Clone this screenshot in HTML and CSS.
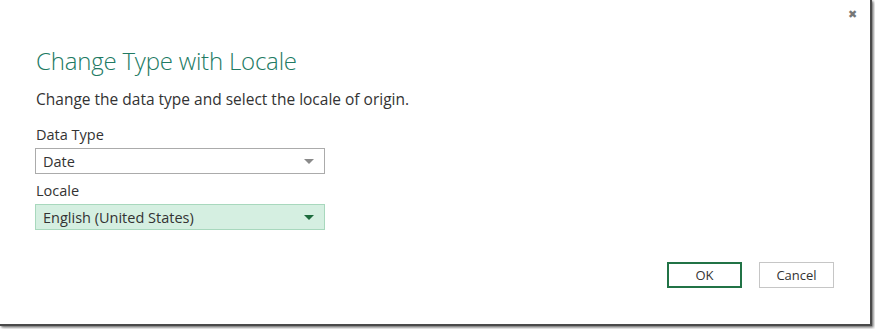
FILE: index.html
```html
<!DOCTYPE html>
<html>
  <head>
    <title>Change Type with Locale</title>
    <link rel="stylesheet" href="styles.css">
  </head>
  <body>
    <div id="dialog">
      <button id="close-button" title="Close">&#x2716;</button>
      <div id="dialog-body">
        <h1 class="dialog-title">Change Type with Locale</h1>
        <p class="dialog-desc">Change the data type and select the locale of origin.</p>
        <div class="field">
          <label class="field-label">Data Type</label>
          <div class="select">
            <span class="select-value">Date</span>
            <span class="select-arrow"></span>
          </div>
        </div>
        <div class="field">
          <label class="field-label">Locale</label>
          <div class="select focused">
            <span class="select-value">English (United States)</span>
            <span class="select-arrow"></span>
          </div>
        </div>
      </div>
      <div id="dialog-footer">
        <button class="btn primary">OK</button>
        <button class="btn">Cancel</button>
      </div>
    </div>
  </body>
</html>
```

FILE: styles.css
```css
* {
  margin: 0;
  padding: 0;
  box-sizing: border-box;
}

body {
  font-family: "Open Sans", "Noto Sans", sans-serif;
  background-color: #ffffff;
  color: #333;
  width: 875px;
  height: 329px;
  overflow: hidden;
}

#dialog {
  position: relative;
  width: 872px;
  height: 326px;
  background-color: #ffffff;
  border-right: 2px solid #4a4a4a;
  border-bottom: 2px solid #4a4a4a;
  box-shadow: 1px 1px 2px rgba(0, 0, 0, 0.45), 2px 2px 3px rgba(0, 0, 0, 0.25);
  display: flex;
  flex-direction: column;
}

#close-button {
  position: absolute;
  top: 6px;
  right: 10px;
  width: 16px;
  height: 16px;
  border: none;
  background: none;
  color: #777;
  font-size: 11px;
  line-height: 16px;
  cursor: pointer;
}

#dialog-body {
  padding: 46px 0 0 36px;
}

.dialog-title {
  font-size: 24px;
  font-weight: 300;
  color: #217a63;
  line-height: 30px;
  letter-spacing: -0.2px;
}

.dialog-desc {
  font-size: 15.5px;
  line-height: 20px;
  margin-top: 13px;
  color: #333;
}

.field {
  margin-top: 17px;
  display: flex;
  flex-direction: column;
}

.field + .field {
  margin-top: 8px;
}

.field-label {
  font-size: 14.5px;
  line-height: 18px;
  color: #333;
  margin-bottom: 4px;
}

.select {
  width: 290px;
  height: 26px;
  margin-left: -1px;
  border: 1px solid #ababab;
  background-color: #ffffff;
  display: flex;
  align-items: center;
  justify-content: space-between;
  padding: 0 10px 0 7px;
}

.select-value {
  font-size: 14.5px;
  color: #333;
}

.select-arrow {
  width: 0;
  height: 0;
  border-left: 5px solid transparent;
  border-right: 5px solid transparent;
  border-top: 5px solid #8a8a8a;
}

.select.focused {
  background-color: #d5efe1;
  border-color: #a8d8bd;
}

.select.focused .select-arrow {
  border-top-color: #1d6b3d;
}

#dialog-footer {
  margin-top: auto;
  padding: 0 36px 36px 0;
  display: flex;
  justify-content: flex-end;
  gap: 17px;
}

.btn {
  width: 75px;
  height: 26px;
  font-family: "Open Sans", "Noto Sans", sans-serif;
  font-size: 13px;
  color: #333;
  background-color: #ffffff;
  border: 1px solid #c6c6c6;
  cursor: pointer;
}

.btn.primary {
  border: 2px solid #217346;
}
```
